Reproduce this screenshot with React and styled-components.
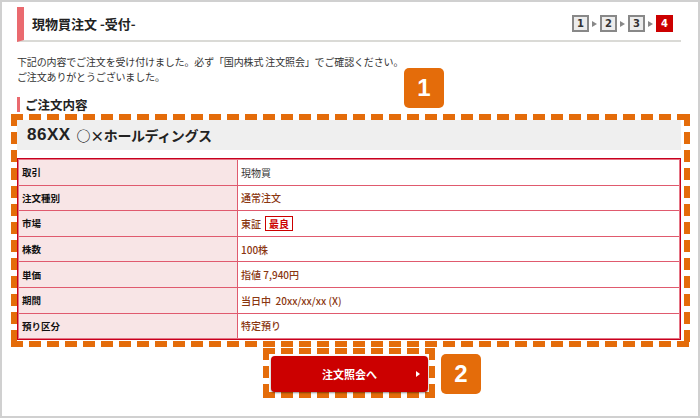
import React from "react";
import styled, { createGlobalStyle } from "styled-components";

const orderRows = [
  { label: "取引", value: "現物買", plain: true },
  { label: "注文種別", value: "通常注文" },
  { label: "市場", value: "東証", tag: "最良" },
  { label: "株数", value: "100株" },
  { label: "単価", value: "指値 7,940円" },
  { label: "期間", value: "当日中  20xx/xx/xx (X)" },
  { label: "預り区分", value: "特定預り" }
];

const dashes = (color) => `
  background-image:
    repeating-linear-gradient(90deg, ${color} 0 12px, transparent 12px 18px),
    repeating-linear-gradient(90deg, ${color} 0 12px, transparent 12px 18px),
    repeating-linear-gradient(180deg, ${color} 0 12px, transparent 12px 18px),
    repeating-linear-gradient(180deg, ${color} 0 12px, transparent 12px 18px);
  background-size: 100% 6px, 100% 6px, 6px 100%, 6px 100%;
  background-position: top left, bottom left, top left, top right;
  background-repeat: no-repeat;
`;

export default function App() {
  return (
    <>
      <GlobalStyle />
      <Frame>
        <Header>
          <Title>現物買注文 -受付-</Title>
          <Steps>
            {[1, 2, 3, 4].map((n) => (
              <React.Fragment key={n}>
                {n > 1 && <StepArrow />}
                <StepBox $active={n === 4}>{n}</StepBox>
              </React.Fragment>
            ))}
          </Steps>
        </Header>

        <Message>
          下記の内容でご注文を受け付けました。必ず「国内株式 注文照会」でご確認ください。
          <br />
          ご注文ありがとうございました。
        </Message>

        <SectionTitle>ご注文内容</SectionTitle>
        <Badge $top={66} $left={402}>1</Badge>

        <Highlight>
          <NameBar>
            <Code>86XX</Code>
            <span>○×ホールディングス</span>
          </NameBar>
          <TableOuter>
            <Table>
              {orderRows.map((row) => (
                <Row key={row.label}>
                  <Label>{row.label}</Label>
                  <Value $plain={row.plain}>
                    {row.value}
                    {row.tag && <Tag>{row.tag}</Tag>}
                  </Value>
                </Row>
              ))}
            </Table>
          </TableOuter>
        </Highlight>

        <ButtonRow>
          <ButtonHighlight>
            <MainButton>注文照会へ</MainButton>
            <SideBadge>2</SideBadge>
          </ButtonHighlight>
        </ButtonRow>
      </Frame>
    </>
  );
}

const GlobalStyle = createGlobalStyle`
  body {
    margin: 0;
    background: #fff;
    font-family: "Noto Sans CJK JP", "Noto Sans", sans-serif;
    color: #333;
  }
`;

const Frame = styled.div`
  position: relative;
  width: 700px;
  height: 418px;
  box-sizing: border-box;
  border: 2px solid #d0d0d0;
  padding: 5px 17px 0 15px;
`;

const Header = styled.div`
  display: flex;
  align-items: center;
  justify-content: space-between;
  height: 35px;
  box-sizing: border-box;
  padding: 0 8px 0 8px;
  border-left: 7px solid #ea6a6f;
  border-bottom: 2px solid #dadad6;
`;

const Title = styled.h1`
  margin: 0;
  font-size: 13px;
  font-weight: 700;
  color: #222;
`;

const Steps = styled.div`
  display: flex;
  align-items: center;
`;

const StepBox = styled.div`
  width: 17px;
  height: 17px;
  box-sizing: border-box;
  display: flex;
  align-items: center;
  justify-content: center;
  font-family: "DejaVu Sans", sans-serif;
  font-size: 10px;
  font-weight: 700;
  color: ${(p) => (p.$active ? "#fff" : "#333")};
  background: ${(p) => (p.$active ? "#cc0000" : "#ececec")};
  border: ${(p) => (p.$active ? "none" : "2px solid #888")};
`;

const StepArrow = styled.span`
  width: 0;
  height: 0;
  margin: 0 3px;
  border-left: 5px solid #888;
  border-top: 3.5px solid transparent;
  border-bottom: 3.5px solid transparent;
`;

const Message = styled.p`
  margin: 12px 0 0;
  font-size: 10px;
  line-height: 15px;
  letter-spacing: -0.15px;
  color: #333;
`;

const SectionTitle = styled.h2`
  margin: 13px 0 0;
  padding-left: 5px;
  border-left: 3px solid #ea6a6f;
  font-size: 12.5px;
  line-height: 15px;
  font-weight: 700;
  color: #222;
`;

const Badge = styled.div`
  position: absolute;
  top: ${(p) => p.$top}px;
  left: ${(p) => p.$left}px;
  width: 40px;
  height: 40px;
  border-radius: 5px;
  background: #e46c0a;
  color: #fff;
  display: flex;
  align-items: center;
  justify-content: center;
  font-family: "Liberation Sans", Arial, sans-serif;
  font-size: 24px;
  font-weight: 700;
`;

const SideBadge = styled(Badge)`
  top: 6px;
  left: calc(100% + 6px);
`;

const Highlight = styled.div`
  margin: 2px -9px 0 -6px;
  padding: 6px 9px 7px 6px;
  ${dashes("#e46c0a")}
`;

const NameBar = styled.div`
  height: 30px;
  display: flex;
  align-items: center;
  padding-left: 10px;
  background: #efefef;
  font-size: 14px;
  font-weight: 700;
  letter-spacing: -0.4px;
  color: #222;
  margin-bottom: 8px;
`;

const Code = styled.span`
  font-family: "Liberation Sans", Arial, sans-serif;
  font-size: 17px;
  letter-spacing: 0.5px;
  margin-right: 6px;
`;

const TableOuter = styled.div`
  border: 1px solid #c8001e;
`;

const Table = styled.div`
  border: 1px solid #e57585;
`;

const Row = styled.div`
  display: grid;
  grid-template-columns: 219px 1fr;
  height: 24.6px;
  border-bottom: 1px solid #e05a6e;
  &:last-child {
    border-bottom: none;
  }
`;

const Label = styled.div`
  display: flex;
  align-items: center;
  padding-left: 3px;
  background: #f8e5e6;
  border-right: 1px solid #e05a6e;
  font-size: 9.5px;
  font-weight: 700;
  color: #111;
`;

const Value = styled.div`
  display: flex;
  align-items: center;
  padding-left: 3px;
  font-size: 10px;
  font-weight: ${(p) => (p.$plain ? 400 : 500)};
  color: ${(p) => (p.$plain ? "#333" : "#8a3610")};
  white-space: pre;
`;

const Tag = styled.span`
  margin-left: 4px;
  padding: 0 3px;
  height: 15px;
  box-sizing: border-box;
  display: inline-flex;
  align-items: center;
  border: 1px solid #c00;
  color: #c00;
  font-weight: 700;
`;

const ButtonRow = styled.div`
  display: flex;
  justify-content: center;
  margin-top: 1px;
`;

const ButtonHighlight = styled.div`
  position: relative;
  padding: 8px 7px 6px 8px;
  ${dashes("#e46c0a")}
`;

const MainButton = styled.button`
  position: relative;
  width: 157px;
  height: 36px;
  border: none;
  border-radius: 4px;
  background: #cc0000;
  box-shadow: 0 1px 2px rgba(0, 0, 0, 0.45);
  color: #fff;
  font-family: "Noto Sans CJK JP", sans-serif;
  font-size: 11px;
  font-weight: 700;
  display: flex;
  align-items: center;
  justify-content: center;
  &::after {
    content: "";
    position: absolute;
    right: 8px;
    top: 50%;
    margin-top: -3px;
    border-left: 4px solid #fff;
    border-top: 3px solid transparent;
    border-bottom: 3px solid transparent;
  }
`;
